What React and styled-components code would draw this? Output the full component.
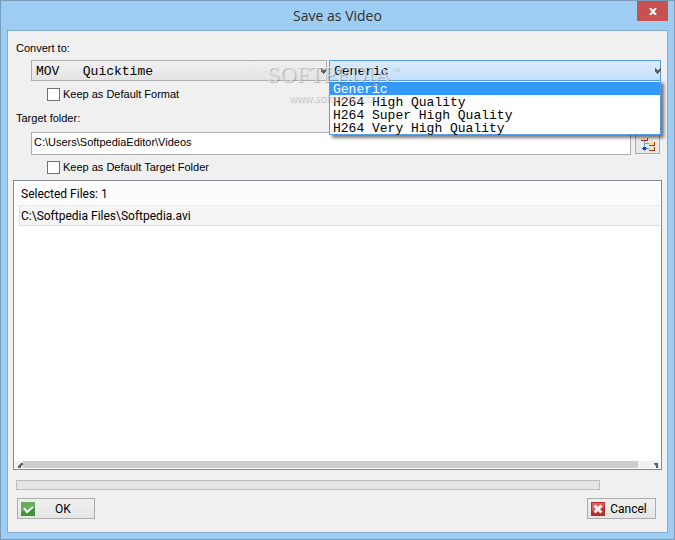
import React, { useState } from "react";
import styled, { createGlobalStyle } from "styled-components";

const qualities = [
  "Generic",
  "H264 High Quality",
  "H264 Super High Quality",
  "H264 Very High Quality",
];

const GlobalStyle = createGlobalStyle`
  * {
    box-sizing: border-box;
  }
  body {
    margin: 0;
    color: #000;
    font-family: "Liberation Sans", sans-serif;
    font-size: 11px;
  }
  button,
  input,
  select {
    margin: 0;
    color: inherit;
    font: inherit;
    border-radius: 0;
    outline: none;
  }
`;

const Window = styled.div`
  display: flex;
  flex-direction: column;
  min-height: 100vh;
  padding: 0 6px 6px;
  border: 1px solid #7a9cbc;
  background: #9ecdf3;
`;

const TitleBar = styled.header`
  display: grid;
  grid-template-columns: 31px 1fr 31px;
  height: 29px;
  h1 {
    grid-column: 2;
    margin: 0;
    color: #33302c;
    font-family: "Open Sans", sans-serif;
    font-size: 14px;
    font-weight: 400;
    line-height: 29px;
    text-align: center;
  }
`;

const CloseButton = styled.button`
  display: flex;
  align-items: center;
  justify-content: center;
  height: 20px;
  padding: 0;
  border: 0;
  background: #c75050;
`;

const Client = styled.form`
  flex: 1;
  display: flex;
  flex-direction: column;
  padding: 9px 5px 13px;
  border: 1px solid #82abd0;
  background: #f0f0f0;
`;

const Label = styled.label`
  margin-left: 3px;
  line-height: 16px;
`;

const FormatRow = styled.div`
  display: grid;
  grid-template-columns: 296px 1fr;
  gap: 2px;
  margin: 4px 1px 5px 18px;
`;

const SelectWrapper = styled.div`
  position: relative;
  height: 21px;
  > svg {
    position: absolute;
    top: 8px;
    right: 0;
    pointer-events: none;
  }
`;

const Select = styled.select`
  display: block;
  width: 100%;
  height: 21px;
  padding: 2px 4px 0;
  appearance: none;
  border: 1px solid ${({ $open }) => ($open ? "#569de5" : "#acacac")};
  background: ${({ $open }) =>
    $open
      ? "linear-gradient(#daebfc, #c4e0fc)"
      : "linear-gradient(#f0f0f0, #e4e4e4)"};
  font-family: "Liberation Mono", monospace;
  font-size: 13px;
`;

const Menu = styled.ul`
  position: absolute;
  top: 20px;
  left: 0;
  right: 0;
  z-index: 1;
  margin: 0;
  padding: 1px 0 0;
  list-style: none;
  border: 1px solid #569de5;
  background: #fff;
  box-shadow: 3px 3px 3px rgba(0, 0, 0, 0.5);
  font-family: "Liberation Mono", monospace;
  font-size: 13px;
`;

const MenuItem = styled.li`
  height: 13px;
  padding-left: 3px;
  line-height: 15px;
  color: ${({ $active }) => ($active ? "#fff" : "#000")};
  background: ${({ $active }) => ($active ? "#3399ff" : "#fff")};
`;

const CheckLabel = styled.label`
  display: flex;
  align-items: center;
  gap: 3px;
  align-self: flex-start;
  height: 16px;
  margin: 0 0 ${({ $space }) => $space}px 34px;
  input {
    width: 13px;
    height: 13px;
    appearance: none;
    border: 1px solid #707070;
    background: #fff;
  }
  input:checked {
    background: #569de5;
  }
`;

const FolderRow = styled.div`
  display: flex;
  gap: 4px;
  margin: 6px 1px 4px 18px;
  input {
    flex: 1;
    min-width: 0;
    height: 23px;
    padding: 0 2px 3px;
    border: 1px solid #abadb3;
    background: #fff;
  }
`;

const BrowseButton = styled.button`
  width: 25px;
  height: 22px;
  margin-right: 1px;
  padding: 0;
  border: 1px solid #acacac;
  background: linear-gradient(#f0f0f0, #e5e5e5);
  svg {
    display: block;
    margin: 2px auto 0;
  }
`;

const FileList = styled.div`
  flex: 1;
  display: flex;
  flex-direction: column;
  justify-content: space-between;
  padding: 0 1px 1px;
  border: 1px solid #828790;
  background: #fff;
`;

const FileTable = styled.table`
  width: 100%;
  border-spacing: 0;
  font-family: Roboto, sans-serif;
  font-size: 12px;
  th {
    height: 25px;
    padding: 1px 6px 0;
    border-bottom: 1px solid #e5e9f0;
    background: #fcfcfc;
    font-weight: 400;
    text-align: left;
  }
  td {
    padding: 0 0 0 4px;
  }
  td div {
    padding: 1px 0 0 1px;
    border: 1px solid #dedfe1;
    border-top: 0;
    border-right: 0;
    background: #f5f5f5;
    line-height: 18px;
  }
`;

const ScrollBar = styled.div`
  display: flex;
  align-items: center;
  height: 7px;
  background: #f0f0f0;
  div {
    flex: 1;
    height: 7px;
    margin-right: 15px;
    background: #cdcdcd;
  }
`;

const Progress = styled.div`
  height: 10px;
  margin: 10px 62px 8px 3px;
  border: 1px solid #bcbcbc;
  background: #e6e6e6;
`;

const Actions = styled.div`
  display: flex;
  justify-content: space-between;
  margin: 0 6px 0 4px;
`;

const ActionButton = styled.button`
  display: flex;
  align-items: center;
  width: ${({ $width }) => $width}px;
  height: 21px;
  padding: 0 3px;
  border: 1px solid #acacac;
  background: linear-gradient(#f0f0f0, #e5e5e5);
  font-family: Roboto, sans-serif;
  font-size: 12px;
  span {
    flex: 1;
    text-align: center;
  }
`;

const Watermark = styled.div`
  position: absolute;
  top: 62px;
  left: 267px;
  z-index: 2;
  color: rgba(245, 245, 245, 0.6);
  font-family: "Liberation Serif", serif;
  font-size: 23px;
  line-height: 26px;
  text-shadow: 1px 1px 1px rgba(90, 90, 90, 0.4);
  pointer-events: none;
  sup {
    font-size: 9px;
    line-height: 9px;
    vertical-align: 9px;
  }
  div {
    padding-left: 22px;
    font-family: "Open Sans", sans-serif;
    font-size: 10px;
    line-height: 20px;
  }
`;

const Chevron = () => (
  <svg width="6" height="6" viewBox="0 0 6 6" aria-hidden="true">
    <path d="M0 0h1v1h1v1h2v-1h1v-1h1v3h-1v1h-1v1h-1v1h-1v-1h-1v-1h-1z" fill="#606060" />
  </svg>
);

const TreeIcon = () => (
  <svg
    width="16"
    height="15"
    viewBox="0 0 16 15"
    shapeRendering="crispEdges"
    aria-hidden="true"
  >
    <path d="M4 4h1v10H4zM5 6h4v1H5zM5 11h4v1H5z" fill="#6f9fd8" />
    <path d="M1 1h5v3H1zM9 5h5v3H9zM9 10h5v3H9z" fill="#f4e68a" />
    <path d="M1 3h6V1h1v3H1zM9 8h5V5h1v4H9zM9 13h5v-3h1v4H9z" fill="#a3352b" />
    <path d="M3 10h3v1h1v1H6v1H3v-1H2v-1h1z" fill="#2b3fb0" />
  </svg>
);

const OkIcon = () => (
  <svg width="14" height="14" viewBox="0 0 14 14" aria-hidden="true">
    <path d="M0 0h14v14H0z" fill="#3f9438" />
    <path d="M0 0h14v6L0 10z" fill="#67ae58" />
    <path d="M3 6l3 4 6-5" stroke="#fff" strokeWidth="2" fill="none" />
  </svg>
);

const CancelIcon = () => (
  <svg width="14" height="14" viewBox="0 0 14 14" aria-hidden="true">
    <path d="M0 0h14v14H0z" fill="#b52e2c" />
    <path d="M1 1h12v5L1 9z" fill="#cf6460" />
    <path d="M3.5 3.5l7 7M10.5 3.5l-7 7" stroke="#fbeeea" strokeWidth="3" />
  </svg>
);

const App = () => {
  const [quality, setQuality] = useState("Generic");
  const [open, setOpen] = useState(true);

  return (
    <Window>
      <GlobalStyle />
      <TitleBar>
        <h1>Save as Video</h1>
        <CloseButton type="button" aria-label="Close">
          <svg width="8" height="7" viewBox="0 0 8 7">
            <path d="M1 0l6 7M7 0L1 7" stroke="#fff" strokeWidth="2" />
          </svg>
        </CloseButton>
      </TitleBar>
      <Client onSubmit={(e) => e.preventDefault()}>
        <Label htmlFor="format">Convert to:</Label>
        <FormatRow>
          <SelectWrapper>
            <Select id="format">
              <option>{"MOV\u00a0\u00a0\u00a0Quicktime"}</option>
            </Select>
            <Chevron />
          </SelectWrapper>
          <SelectWrapper>
            <Select
              $open={open}
              aria-label="Quality"
              value={quality}
              onChange={(e) => setQuality(e.target.value)}
            >
              {qualities.map((item) => (
                <option key={item}>{item}</option>
              ))}
            </Select>
            <Chevron />
            {open && (
              <Menu role="listbox" aria-label="Quality">
                {qualities.map((item) => (
                  <MenuItem
                    key={item}
                    role="option"
                    aria-selected={item === quality}
                    $active={item === quality}
                    onClick={() => {
                      setQuality(item);
                      setOpen(false);
                    }}
                  >
                    {item}
                  </MenuItem>
                ))}
              </Menu>
            )}
          </SelectWrapper>
        </FormatRow>
        <CheckLabel $space={8}>
          <input type="checkbox" />
          Keep as Default Format
        </CheckLabel>
        <Label htmlFor="folder">Target folder:</Label>
        <FolderRow>
          <input id="folder" type="text" defaultValue="C:\Users\SoftpediaEditor\Videos" />
          <BrowseButton type="button" aria-label="Browse">
            <TreeIcon />
          </BrowseButton>
        </FolderRow>
        <CheckLabel $space={5}>
          <input type="checkbox" />
          Keep as Default Target Folder
        </CheckLabel>
        <FileList>
          <FileTable>
            <thead>
              <tr>
                <th>Selected Files: 1</th>
              </tr>
            </thead>
            <tbody>
              <tr>
                <td>
                  <div>C:\Softpedia Files\Softpedia.avi</div>
                </td>
              </tr>
            </tbody>
          </FileTable>
          <ScrollBar>
            <svg width="8" height="7" viewBox="0 0 8 7" aria-hidden="true">
              <path d="M8 2H6L3 5v2h3V5l2-1z" fill="#606060" />
            </svg>
            <div />
            <svg width="7" height="7" viewBox="0 0 7 7" aria-hidden="true">
              <path d="M1 2h4v5H3V5L1 3z" fill="#606060" />
            </svg>
          </ScrollBar>
        </FileList>
        <Progress role="progressbar" aria-label="Conversion progress" aria-valuenow={0} />
        <Actions>
          <ActionButton $width={78} type="submit">
            <OkIcon />
            <span>OK</span>
          </ActionButton>
          <ActionButton $width={69} type="button">
            <CancelIcon />
            <span>Cancel</span>
          </ActionButton>
        </Actions>
      </Client>
      <Watermark aria-hidden="true">
        SOFTPEDIA<sup>™</sup>
        <div>www.softpedia.com</div>
      </Watermark>
    </Window>
  );
};

export default App;
